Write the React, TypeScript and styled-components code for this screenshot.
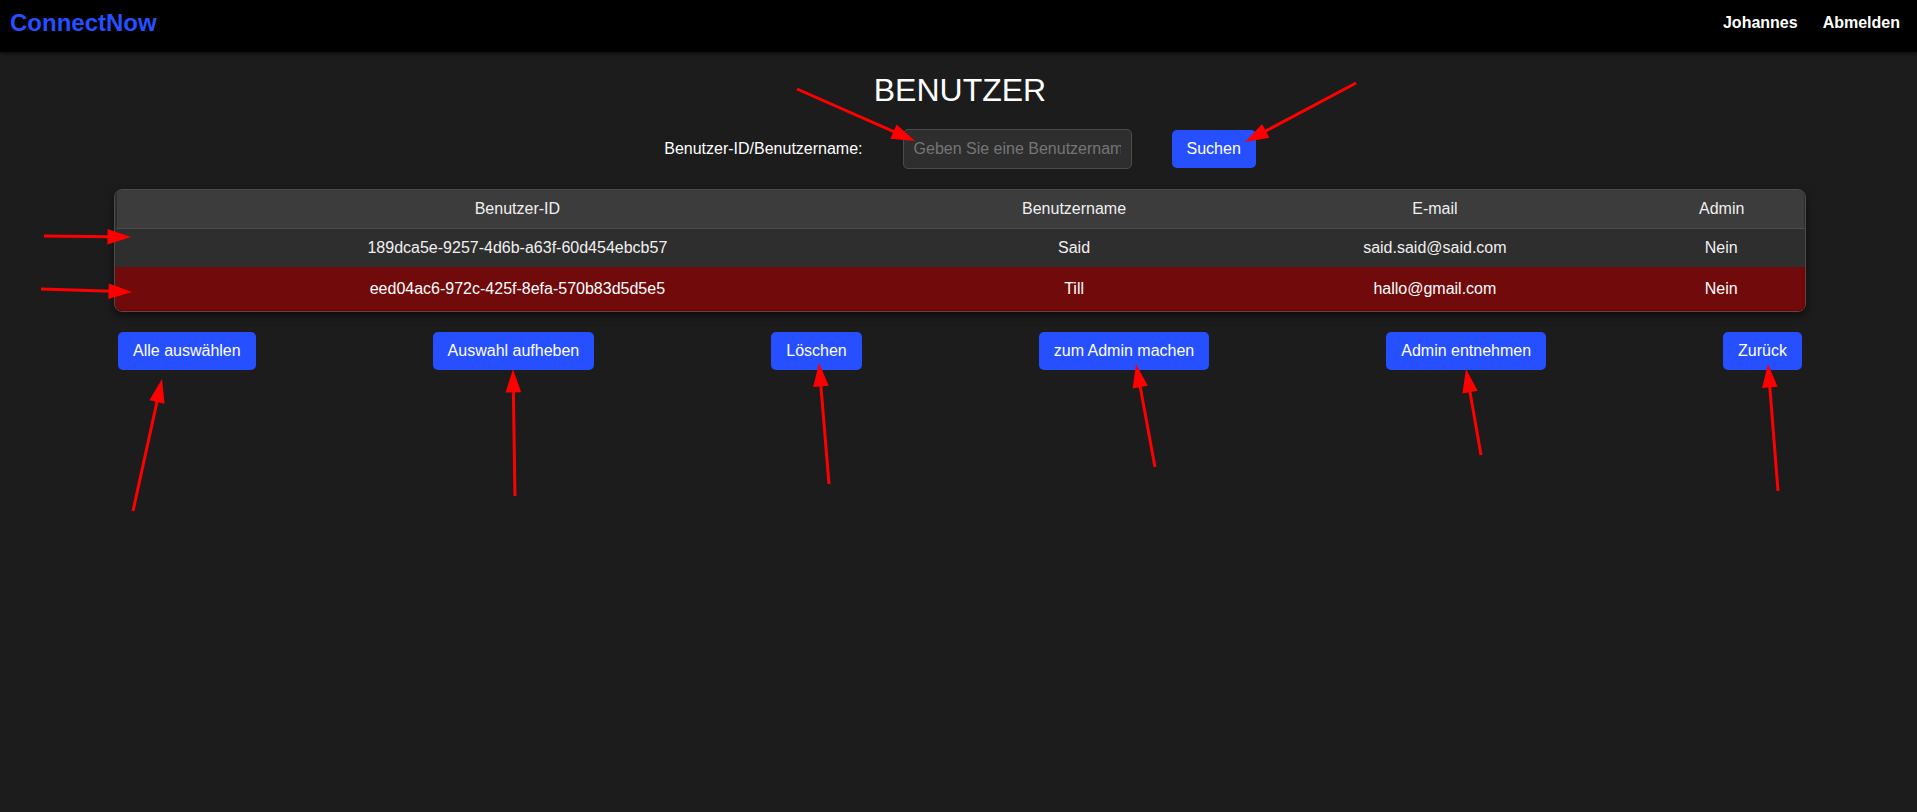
import React from 'react';
import styled, { createGlobalStyle } from 'styled-components';

const GlobalStyle = createGlobalStyle`
  *, *::before, *::after { box-sizing: border-box; }
  body {
    margin: 0;
    min-height: 100vh;
    background: #1c1c1c;
    color: #fff;
    font: 16px/18px "Liberation Sans", Arial, sans-serif;
  }
`;

const Page = styled.div`
  position: relative;
`;

const Header = styled.header`
  display: flex;
  justify-content: space-between;
  align-items: flex-start;
  height: 52px;
  padding: 9px 17px 0 10px;
  background: #000;
  box-shadow: 0 2px 4px rgba(0, 0, 0, 0.5);
`;

const Logo = styled.a`
  color: #264fff;
  font-size: 24px;
  line-height: 28px;
  font-weight: bold;
  text-decoration: none;
`;

const Nav = styled.nav`
  display: flex;
  gap: 25px;
  padding-top: 5px;
`;

const NavLink = styled.a`
  color: #fff;
  font-weight: bold;
  text-decoration: none;
`;

const Main = styled.main`
  display: flex;
  flex-direction: column;
  align-items: center;
  padding: 20px 17px 0 20px;
`;

const Title = styled.h1`
  margin: 0 0 21px;
  font-size: 32px;
  line-height: 36px;
  font-weight: normal;
`;

const SearchForm = styled.form`
  display: flex;
  align-items: center;
  gap: 40px;
  margin-bottom: 20px;
`;

const SearchInput = styled.input`
  width: 229px;
  height: 40px;
  padding: 10px;
  border: 1px solid #4b4b4b;
  border-radius: 5px;
  background: #2e2e2e;
  color: #fff;
  font: inherit;

  &::placeholder { color: #757575; }
`;

const Button = styled.button`
  height: 38px;
  padding: 10px 15px;
  border: 0;
  border-radius: 5px;
  background: #264fff;
  color: #fff;
  font: inherit;
  white-space: nowrap;
`;

const TableFrame = styled.div`
  width: 90%;
  border: 1px solid #4b4b4b;
  border-radius: 8px;
  background: #2e2e2e;
  box-shadow: 0 4px 8px rgba(0, 0, 0, 0.5);
  overflow: hidden;
`;

const UserTable = styled.table`
  width: 100%;
  table-layout: fixed;
  border-collapse: separate;
  border-spacing: 0;
`;

const Column = styled.col<{ $width: number }>`
  width: ${({ $width }) => $width}%;
`;

const HeadCell = styled.th`
  height: 39px;
  padding: 0;
  border-bottom: 1px solid #4b4b4b;
  background: #3c3c3c;
  color: #f0f0f0;
  font-weight: normal;

  &:first-child { border-left: 2px solid #2e2e2e; }
  &:last-child { border-right: 1px solid #2e2e2e; }
`;

const Cell = styled.td`
  padding: 0;
  text-align: center;

  &:first-child { padding-left: 2px; }
  &:last-child { padding-right: 2px; }
`;

const UserRow = styled.tr<{ $selected: boolean }>`
  height: ${({ $selected }) => ($selected ? 44 : 38)}px;
  background: ${({ $selected }) => ($selected ? '#710a0a' : 'transparent')};
  color: ${({ $selected }) => ($selected ? '#fff' : '#f0f0f0')};

  ${Cell} {
    box-shadow: ${({ $selected }) => ($selected ? 'inset 0 -2px #7c0202' : 'none')};
  }

  ${Cell}:last-child {
    box-shadow: ${({ $selected }) => ($selected ? 'inset -3px -2px #7c0202' : 'none')};
  }
`;

const Actions = styled.div`
  display: flex;
  justify-content: space-between;
  width: 90%;
  margin-top: 20px;
  padding: 0 4px;
`;

const Annotations = styled.svg`
  position: absolute;
  top: 0;
  left: 0;
  overflow: visible;
  pointer-events: none;
`;

const users = [
  { id: '189dca5e-9257-4d6b-a63f-60d454ebcb57', name: 'Said', email: 'said.said@said.com', admin: false, selected: false },
  { id: 'eed04ac6-972c-425f-8efa-570b83d5d5e5', name: 'Till', email: 'hallo@gmail.com', admin: false, selected: true },
];

const actions = ['Alle auswählen', 'Auswahl aufheben', 'Löschen', 'zum Admin machen', 'Admin entnehmen', 'Zurück'];

// Start point and tip of every arrow.
const arrows = [
  [797, 89, 915, 141],
  [1356, 83, 1245, 142],
  [44, 236, 131, 237],
  [41, 289, 132, 292],
  [133, 511, 162, 379],
  [515, 496, 513, 369],
  [829, 484, 819, 363],
  [1155, 467, 1136, 364],
  [1481, 455, 1466, 369],
  [1778, 491, 1768, 364],
];

export default function App() {
  return (
    <Page>
      <GlobalStyle />
      <Header>
        <Logo href="#">ConnectNow</Logo>
        <Nav>
          <NavLink href="#">Johannes</NavLink>
          <NavLink href="#">Abmelden</NavLink>
        </Nav>
      </Header>
      <Main>
        <Title>BENUTZER</Title>
        <SearchForm onSubmit={(event) => event.preventDefault()}>
          <label htmlFor="user-search">Benutzer-ID/Benutzername:</label>
          <SearchInput id="user-search" type="text" placeholder="Geben Sie eine Benutzername ein" />
          <Button type="submit">Suchen</Button>
        </SearchForm>
        <TableFrame>
          <UserTable>
            <colgroup>
              <Column $width={47.5} />
              <Column $width={18.5} />
              <Column $width={24.2} />
              <Column $width={9.8} />
            </colgroup>
            <thead>
              <tr>
                <HeadCell>Benutzer-ID</HeadCell>
                <HeadCell>Benutzername</HeadCell>
                <HeadCell>E-mail</HeadCell>
                <HeadCell>Admin</HeadCell>
              </tr>
            </thead>
            <tbody>
              {users.map((user) => (
                <UserRow key={user.id} $selected={user.selected}>
                  <Cell>{user.id}</Cell>
                  <Cell>{user.name}</Cell>
                  <Cell>{user.email}</Cell>
                  <Cell>{user.admin ? 'Ja' : 'Nein'}</Cell>
                </UserRow>
              ))}
            </tbody>
          </UserTable>
        </TableFrame>
        <Actions>
          {actions.map((label) => (
            <Button key={label} type="button">{label}</Button>
          ))}
        </Actions>
      </Main>
      <Annotations width="1" height="1" aria-hidden="true">
        {arrows.map(([x1, y1, x2, y2]) => {
          const length = Math.hypot(x2 - x1, y2 - y1);
          const angle = (Math.atan2(y2 - y1, x2 - x1) * 180) / Math.PI;
          return (
            <g key={`${x1}-${y1}`} transform={`translate(${x2} ${y2}) rotate(${angle})`} fill="#f00">
              <rect x={-length} y={-1.5} width={length - 20} height={3} />
              <path d="M0 0L-23.5 -7.8V7.8Z" />
            </g>
          );
        })}
      </Annotations>
    </Page>
  );
}
